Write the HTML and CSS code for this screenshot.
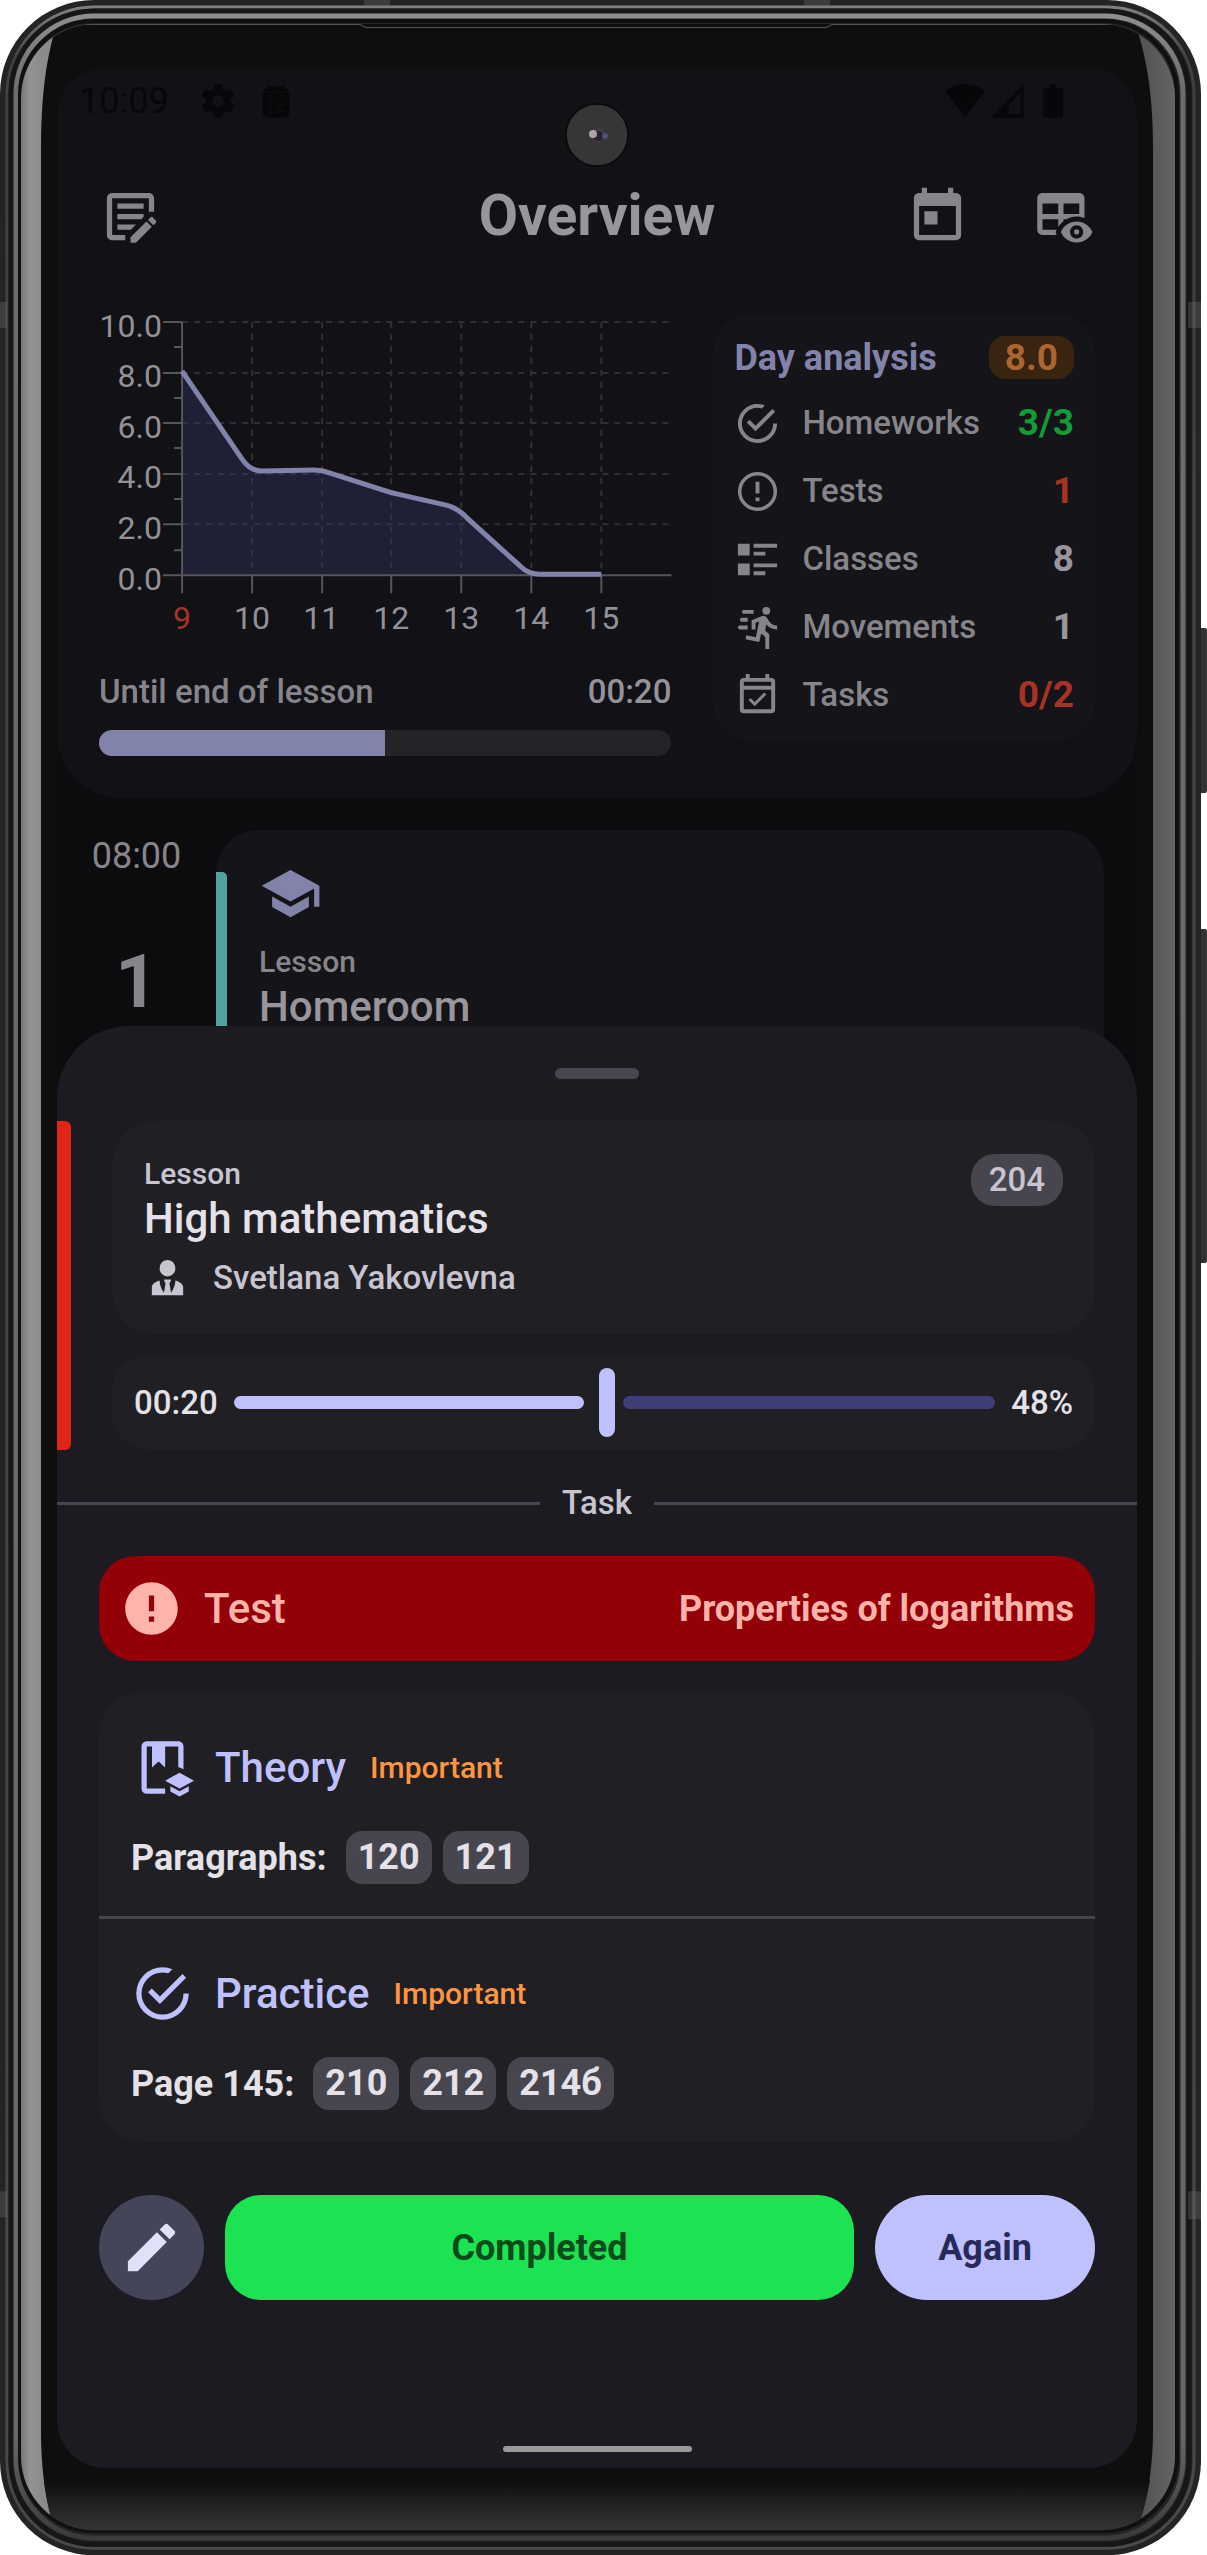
FILE: index.html
```html
<!DOCTYPE html>
<html lang="en">
<head>
<meta charset="utf-8">
<meta name="viewport" content="width=device-width, initial-scale=1">
<title>Overview</title>
<link rel="stylesheet" href="styles.css">
</head>
<body>
<div class="device">
  <svg class="device-frame" viewBox="0 0 1207 2555" preserveAspectRatio="none" aria-hidden="true">
    <defs>
      <linearGradient id="ring" x1="0" y1="0" x2="0" y2="1">
        <stop offset="0" stop-color="#8e8e8e"/><stop offset=".03" stop-color="#6c6c6c"/><stop offset=".96" stop-color="#666"/><stop offset="1" stop-color="#3a3a3a"/>
      </linearGradient>
      <linearGradient id="edge" x1="0" y1="0" x2="0" y2="1">
        <stop offset="0" stop-color="#808080"/><stop offset=".02" stop-color="#404040"/><stop offset=".97" stop-color="#484848"/><stop offset="1" stop-color="#4a4a4a"/>
      </linearGradient>
      <linearGradient id="glass" x1="0" y1="0" x2="1" y2="0">
        <stop offset="0" stop-color="#777"/><stop offset=".008" stop-color="#939393"/><stop offset=".018" stop-color="#8b8b8b"/><stop offset=".5" stop-color="#222"/><stop offset=".975" stop-color="#555"/><stop offset="1" stop-color="#646464"/>
      </linearGradient>
      <linearGradient id="chin" x1="0" y1="0" x2="0" y2="1">
        <stop offset="0" stop-color="#0e0e0e"/><stop offset="1" stop-color="#383838"/>
      </linearGradient>
      <radialGradient id="lens"><stop offset="0" stop-color="#55506a"/><stop offset=".6" stop-color="#3a3338"/><stop offset="1" stop-color="#353535"/></radialGradient>
      <clipPath id="glass-clip"><rect x="21" y="24" width="1154" height="2506" rx="74"/></clipPath>
    </defs>
    <path fill="#333" d="M1196 628h9q2 0 2 3v159q0 3-2 3h-9zM1196 929h9q2 0 2 3v328q0 3-2 3h-9z"/>
    <rect width="1201" height="2555" rx="94" fill="#242424"/>
    <rect x="7" y="7" width="1187" height="2541" rx="87" fill="none" stroke="url(#edge)" stroke-width="3"/>
    <rect x="11" y="11" width="1178" height="2533" rx="83" fill="none" stroke="#161616" stroke-width="5"/>
    <rect x="16" y="16" width="1167" height="2522" rx="78" fill="none" stroke="url(#ring)" stroke-width="5"/>
    <rect x="20" y="21" width="1157" height="2510" rx="74" fill="none" stroke="#101010" stroke-width="4"/>
    <g clip-path="url(#glass-clip)">
      <rect x="21" y="24" width="1154" height="2506" fill="url(#glass)"/>
      <path fill="#0e0e0e" d="M41 150C41 100 45 60 58 20H1134C1148 60 1153 100 1153 150V2430C1153 2470 1146 2510 1134 2535H58C46 2510 41 2470 41 2430Z"/>
      <path fill="url(#chin)" d="M44 2480H1150Q1144 2515 1134 2535H58Q48 2515 44 2480Z"/>
      <path fill="none" stroke="#555" d="M60 24.500H360L366 27.500H826L832 24.500H1134"/>
    </g>
    <g fill="#777" fill-opacity=".3"><path d="M364 0h26v8h-26zM804 0h26v8h-26zM0 302h7v26H0zM1188 302h13v26h-13zM0 2191h7v26H0zM1188 2191h13v28h-13z"/></g>
  </svg>

  <main class="screen">
    <section class="overview">
      <div class="status-bar">
        <span class="clock">10:09</span>
        <svg class="icon-s" viewBox="0 0 24 24"><path d="M12 15.500A3.500 3.500 0 0 1 8.500 12 3.500 3.500 0 0 1 12 8.500a3.500 3.500 0 0 1 3.500 3.500 3.500 3.500 0 0 1-3.500 3.500m7.430-2.530c.04-.32.07-.64.07-.97s-.03-.66-.07-1l2.110-1.630c.19-.15.24-.42.12-.64l-2-3.460c-.12-.22-.39-.31-.61-.22l-2.490 1c-.52-.39-1.060-.73-1.690-.98l-.37-2.650A.506.506 0 0 0 14 2h-4c-.25 0-.46.18-.5.420l-.37 2.650c-.63.25-1.170.59-1.690.98l-2.490-1c-.22-.09-.49 0-.61.22l-2 3.460c-.13.22-.07.49.12.64L4.570 11c-.04.34-.07.67-.07 1s.03.65.07.97l-2.110 1.660c-.19.15-.25.42-.12.64l2 3.460c.12.22.39.3.61.22l2.490-1.010c.52.4 1.060.74 1.690.99l.37 2.650c.04.24.25.42.5.42h4c.25 0 .46-.18.5-.42l.37-2.650c.63-.26 1.170-.59 1.690-.99l2.490 1.010c.22.08.49 0 .61-.22l2-3.460c.12-.22.07-.49-.12-.64z"/></svg>
        <svg class="icon-s" viewBox="0 0 24 24"><path d="M7 2l2 1.500L11 3h2l2 .5L17 2v2q3 1 3 4v10q0 4-4 4H8q-4 0-4-4V8q0-3 3-4z"/><path d="M4 6.500h16M7 10.500l1 1 1.500-2M7 14.500l1 1 1.500-2M7 18.500l1 1 1.500-2M12 10.500h5M12 14.500h5M12 18.500h5" fill="none" stroke="#121116" stroke-opacity=".7" stroke-width=".8"/></svg>
        <span class="spacer"></span>
        <svg class="icon-s" viewBox="0 0 24 24"><path d="M12 22 0 6q5-4 12-4t12 4z"/></svg>
        <svg class="icon-s" viewBox="0 0 24 24"><path fill-rule="evenodd" d="M2 22 22 2v20zM13 20h7V7l-7 7z"/></svg>
        <svg class="icon-battery" viewBox="0 0 12 20"><path d="M4 0h4v2h2.700Q12 2 12 3.300v15.400Q12 20 10.700 20H1.300Q0 20 0 18.700V3.300Q0 2 1.300 2H4z"/></svg>
      </div>
      <svg class="camera" viewBox="0 0 64 64" aria-hidden="true"><circle cx="32" cy="32" r="31" fill="#363636" stroke="#080808" stroke-width="1.500"/><circle cx="33" cy="32" r="13" fill="url(#lens)"/><circle cx="33" cy="33" r="5" fill="#29222b"/><circle cx="28" cy="31" r="4" fill="#c9bfc6" fill-opacity=".8"/><circle cx="40" cy="33" r="3" fill="#4b5170"/></svg>

      <header class="title-row">
        <div class="title-side">
          <button class="icon-button" aria-label="Edit notes"><svg class="icon-l" viewBox="0 0 24 24"><path d="M10 21H5C3.890 21 3 20.110 3 19V5C3 3.890 3.890 3 5 3H19C20.110 3 21 3.890 21 5V10.330C20.700 10.210 20.370 10.140 20.040 10.140 19.670 10.140 19.320 10.220 19 10.370V5H5V19H10.110L10 19.110V21M7 9H17V7H7V9M7 17H12.110L14.110 15H7V17M7 13H16.120L17 12.120V11H7V13M21.700 13.580L20.420 12.300C20.210 12.090 19.860 12.090 19.650 12.300L18.650 13.300 20.700 15.350 21.700 14.350C21.910 14.140 21.910 13.790 21.700 13.580M12 22H14.060L20.110 15.930 18.060 13.880 12 19.940V22Z"/></svg></button>
        </div>
        <h1>Overview</h1>
        <div class="title-side title-side-end">
          <button class="icon-button" aria-label="Today"><svg class="icon-l" viewBox="0 0 24 24"><path d="M19 3h-1V1h-2v2H8V1H6v2H5c-1.110 0-1.990.9-1.990 2L3 19c0 1.100.89 2 2 2h14c1.100 0 2-.9 2-2V5c0-1.100-.9-2-2-2zm0 16H5V8h14v11zM7 10h5v5H7z"/></svg></button>
          <button class="icon-button" aria-label="Show timetable"><svg class="icon-l" viewBox="0 0 24 24"><path d="M17 16.880C17.560 16.880 18 17.320 18 17.880S17.560 18.880 17 18.880 16 18.430 16 17.880 16.440 16.880 17 16.880M17 13.880C19.730 13.880 22.060 15.540 23 17.880 22.060 20.220 19.730 21.880 17 21.880S11.940 20.220 11 17.880C11.940 15.540 14.270 13.880 17 13.880M17 15.380C15.620 15.380 14.500 16.500 14.500 17.880S15.620 20.380 17 20.380 19.500 19.260 19.500 17.880 18.380 15.380 17 15.380M18 3H4C2.900 3 2 3.900 2 5V17C2 18.100 2.900 19 4 19H9.420C9.260 18.680 9.120 18.340 9 18 9.120 17.660 9.260 17.320 9.420 17H4V13H10V15.970C10.550 15.110 11.230 14.370 12 13.760V13H13.150C14.310 12.360 15.620 12 17 12 18.060 12 19.070 12.210 20 12.590V5C20 3.900 19.100 3 18 3M10 11H4V7H10V11M18 11H12V7H18V11Z"/></svg></button>
        </div>
      </header>

      <div class="summary">
        <div class="load">
          <svg class="chart" viewBox="99 316 572 324" role="img" aria-label="Load by hour">
            <path class="chart-grid" d="M182 323H671M182 374H671M182 424H671M182 475H671M182 525H671M252 323V576M322 323V576M391 323V576M461 323V576M531 323V576M601 323V576"/>
            <path class="chart-area" d="M182 372 243 459Q251 472 262 472L314 471Q322 471 330 474L380 490Q391 494 402 496L446 506Q458 509 467 519L520 566Q528 575 540 575L601 575V576H182Z"/>
            <path class="chart-axis" d="M182 323V594M163 576H671M163 323H182M163 374H182M163 424H182M163 475H182M163 525H182M174 348H182M174 399H182M174 449H182M174 500H182M174 551H182M252 576V594M322 576V594M391 576V594M461 576V594M531 576V594M601 576V594"/>
            <path class="chart-line" d="M182 372 242 460Q250 472 262 472L314 471Q322 471 330 474L380 490Q391 494 402 496L446 506Q458 509 467 519L520 567Q528 575 540 575L601 575"/>
            <g class="chart-labels chart-labels-y">
              <text x="162" y="338">10.0</text><text x="162" y="388">8.0</text><text x="162" y="439">6.0</text><text x="162" y="489">4.0</text><text x="162" y="540">2.0</text><text x="162" y="591">0.0</text>
            </g>
            <g class="chart-labels chart-labels-x">
              <text class="chart-now" x="182" y="630">9</text><text x="252" y="630">10</text><text x="321" y="630">11</text><text x="391" y="630">12</text><text x="461" y="630">13</text><text x="531" y="630">14</text><text x="601" y="630">15</text>
            </g>
          </svg>
          <div class="countdown"><label for="lesson-progress">Until end of lesson</label><time>00:20</time></div>
          <progress id="lesson-progress" class="progress" max="100" value="50"></progress>
        </div>

        <section class="analysis">
          <div class="analysis-head"><h2>Day analysis</h2><span class="score">8.0</span></div>
          <ul class="stats">
            <li><svg class="icon-m" viewBox="0 0 24 24"><path d="M20 12a8 8 0 0 1-8 8 8 8 0 0 1-8-8 8 8 0 0 1 8-8c.76 0 1.500.11 2.200.31l1.570-1.570A9.822 9.822 0 0 0 12 2 10 10 0 0 0 2 12a10 10 0 0 0 10 10 10 10 0 0 0 10-10M7.910 10.080 6.500 11.500 11 16 21 6l-1.410-1.420L11 13.170z"/></svg><span>Homeworks</span><b class="good">3/3</b></li>
            <li><svg class="icon-m" viewBox="0 0 24 24"><path d="M11 15h2v2h-2zm0-8h2v6h-2zm1-5a10 10 0 1 0 0 20 10 10 0 0 0 0-20m0 18.200a8.200 8.200 0 1 1 0-16.400 8.200 8.200 0 0 1 0 16.400"/></svg><span>Tests</span><b class="bad">1</b></li>
            <li><svg class="icon-m" viewBox="0 0 24 24"><path d="M2 4h6v6H2zm8 0h12v2H10zm0 4h6v2h-6zM2 14h6v6H2zm8 0h12v2H10zm0 4h6v2h-6z"/></svg><span>Classes</span><b>8</b></li>
            <li><svg class="icon-m" viewBox="0 0 24 24"><path d="M16.500 5.500A2 2 0 0 0 18.500 3.500 2 2 0 0 0 16.500 1.500 2 2 0 0 0 14.500 3.500 2 2 0 0 0 16.500 5.500M12.900 19.400L13.900 15 16 17V23H18V15.500L15.900 13.500 16.500 10.500A7.290 7.290 0 0 0 22 13V11A4.790 4.790 0 0 1 17.800 8.600L16.800 7A2.120 2.120 0 0 0 15.100 6 2.730 2.730 0 0 0 14.300 6.100L9 8.300V13H11V9.600L12.800 8.900 11.200 17 6.300 16 5.900 18 12.900 19.400M4 9A1 1 0 0 1 3 8 1 1 0 0 1 4 7H7V9H4M5 5A1 1 0 0 1 4 4 1 1 0 0 1 5 3H10V5H5M3 13A1 1 0 0 1 2 12 1 1 0 0 1 3 11H7V13H3Z"/></svg><span>Movements</span><b>1</b></li>
            <li><svg class="icon-m" viewBox="0 0 24 24"><path d="M19 3h-1V1h-2v2H8V1H6v2H5a2 2 0 0 0-2 2v14a2 2 0 0 0 2 2h14a2 2 0 0 0 2-2V5a2 2 0 0 0-2-2m0 16H5V9h14zM5 7V5h14v2zm5.560 10.460 5.940-5.930-1.070-1.060-4.870 4.870-2.110-2.110-1.060 1.060z"/></svg><span>Tasks</span><b class="bad">0/2</b></li>
          </ul>
        </section>
      </div>
    </section>

    <section class="schedule">
      <div class="slot"><time>08:00</time><strong>1</strong></div>
      <article class="slot-card">
        <span class="slot-mark"></span>
        <div class="slot-body">
          <svg class="icon-l" viewBox="0 0 24 24"><path d="M12 3 1 9l11 6 9-4.910V17h2V9M5 13.180v4L12 21l7-3.820v-4L12 17z"/></svg>
          <span class="overline">Lesson</span>
          <h3>Homeroom</h3>
        </div>
      </article>
    </section>

    <section class="sheet">
      <span class="handle"></span>
      <div class="lesson">
        <span class="lesson-mark"></span>
        <div class="lesson-cards">
          <article class="card lesson-card">
            <div>
              <span class="overline">Lesson</span>
              <h2>High mathematics</h2>
              <p class="teacher"><svg class="icon-m" viewBox="0 0 24 24"><path d="M12 3A4 4.300 0 0 1 16 7.300 4 4 0 0 1 12 11.500 4 4 0 0 1 8 7.300 4 4.300 0 0 1 12 3M16 13.540C16 14.600 15.720 17.070 13.810 19.830L13 15l.94-1.880C13.320 13.050 12.670 13 12 13s-1.320.05-1.940.12L11 15l-.81 4.830C8.280 17.070 8 14.600 8 13.540 5.610 14.240 4 15.500 4 17v4h16v-4c0-1.500-1.600-2.760-4-3.460z"/></svg>Svetlana Yakovlevna</p>
            </div>
            <span class="room">204</span>
          </article>
          <div class="card time-card">
            <label for="elapsed">00:20</label>
            <div class="slider">
              <span class="track track-done"></span><span class="track track-left"></span>
              <input id="elapsed" type="range" min="0" max="100" step="1" value="49">
            </div>
            <output for="elapsed">48%</output>
          </div>
        </div>
      </div>

      <h3 class="divider">Task</h3>

      <div class="test-card">
        <svg class="icon-l" viewBox="0 0 24 24"><path d="M12 2C6.480 2 2 6.480 2 12s4.480 10 10 10 10-4.480 10-10S17.520 2 12 2m1 15h-2v-2h2zm0-4h-2V7h2z"/></svg>
        <span class="test-name">Test</span>
        <b>Properties of logarithms</b>
      </div>

      <div class="card homework">
        <section class="homework-part">
          <header><svg class="icon-l" viewBox="0 0 24 24"><path d="M13 20H6V4h2v8l2.500-2.250L13 12V4h5v7.800l2 .9V4c0-1.100-.9-2-2-2H6a2 2 0 0 0-2 2v16a2 2 0 0 0 2 2h7zM18.500 14 13 17l5.500 3 5.500-3zM15 19.100v2L18.500 23l3.500-1.900v-2L18.500 21z"/></svg><h4>Theory</h4><em>Important</em></header>
          <p class="items"><b>Paragraphs:</b><span class="chip">120</span><span class="chip">121</span></p>
        </section>
        <section class="homework-part">
          <header><svg class="icon-l" viewBox="0 0 24 24"><path d="M20 12a8 8 0 0 1-8 8 8 8 0 0 1-8-8 8 8 0 0 1 8-8c.76 0 1.500.11 2.200.31l1.570-1.570A9.822 9.822 0 0 0 12 2 10 10 0 0 0 2 12a10 10 0 0 0 10 10 10 10 0 0 0 10-10M7.910 10.080 6.500 11.500 11 16 21 6l-1.410-1.420L11 13.170z"/></svg><h4>Practice</h4><em>Important</em></header>
          <p class="items"><b>Page 145:</b><span class="chip">210</span><span class="chip">212</span><span class="chip">214б</span></p>
        </section>
      </div>

      <div class="actions">
        <button class="edit" aria-label="Edit"><svg class="icon-l" viewBox="0 0 24 24"><path d="M20.710 7.040c.39-.39.39-1.040 0-1.410l-2.340-2.340c-.37-.39-1.020-.39-1.410 0l-1.840 1.830 3.750 3.750M3 17.250V21h3.750L17.810 9.930l-3.750-3.750z"/></svg></button>
        <button class="complete">Completed</button>
        <button class="again">Again</button>
      </div>
      <span class="home-bar"></span>
    </section>
  </main>
</div>
</body>
</html>
```
FILE: styles.css
```css
* { box-sizing: border-box; }

body {
  margin: 0;
  background: #fff;
  font-family: Roboto, "Liberation Sans", sans-serif;
  font-size: 33px;
  line-height: 40px;
  font-weight: 500;
}

h1, h2, h3, h4, p, ul { margin: 0; padding: 0; font: inherit; }
ul { list-style: none; }
svg { display: block; fill: currentColor; }

button {
  border: 0;
  padding: 0;
  background: none;
  color: inherit;
  font: inherit;
}

.icon-s { width: 40px; height: 40px; }
.icon-m { width: 47px; height: 47px; flex: none; }
.icon-l { width: 63px; height: 63px; flex: none; }

/* Phone body */
.device { position: relative; padding: 68px 70px 87px 57px; }
.device-frame { position: absolute; inset: 0; width: 100%; height: 100%; }

.screen {
  position: relative;
  overflow: hidden;
  border-radius: 48px;
  background: #0c0c0e;
  color: #95939a;
}

/* Upper panel */
.overview {
  position: relative;
  padding: 0 42px 42px;
  border-radius: 0 0 64px 64px;
  background: #121116;
}

.status-bar {
  display: flex;
  align-items: center;
  gap: 2px;
  height: 66px;
  margin: 0 -20px;
  padding-right: 52px;
  color: #070709;
}
.clock { margin-right: 27px; font-size: 36px; font-weight: 400; }
.status-bar .icon-s + .icon-s { margin-left: 16px; }
.spacer { flex: 1; }
.status-bar .spacer ~ .icon-s + .icon-s { margin-left: 0; }
.icon-battery { width: 20px; height: 34px; margin-left: 14px; }

.camera {
  position: absolute;
  top: 35px;
  left: 50%;
  width: 64px;
  height: 64px;
  margin-left: -32px;
}

.title-row {
  display: grid;
  grid-template-columns: 1fr auto 1fr;
  align-items: center;
  height: 64px;
  margin: 50px 0 67px;
}
.title-row h1 { font-size: 57px; line-height: 64px; font-weight: 700; color: #98969c; }
.title-side { display: flex; gap: 63px; color: #86858b; }
.title-side-end { justify-content: flex-end; }

.summary {
  display: grid;
  grid-template-columns: minmax(0, 3fr) minmax(0, 2fr);
  align-items: start;
  gap: 42px;
}

.chart { width: 100%; height: auto; overflow: visible; }
.chart-grid { fill: none; stroke: #303034; stroke-width: 2; stroke-dasharray: 6 6; }
.chart-area { fill: #34376a; fill-opacity: .38; }
.chart-axis { fill: none; stroke: #56555a; stroke-width: 2; }
.chart-line { fill: none; stroke: #8283ab; stroke-width: 5; }
.chart-labels { fill: #939198; font-size: 32px; font-weight: 400; }
.chart-labels-y { text-anchor: end; }
.chart-labels-x { text-anchor: middle; }
.chart-now { fill: #a93226; }

.countdown { display: flex; justify-content: space-between; margin: 33px 0 18px; color: #86858b; }
.countdown time { color: #95939a; }

.progress {
  display: block;
  width: 100%;
  height: 26px;
  border: 0;
  border-radius: 13px;
  overflow: hidden;
  appearance: none;
  background: #242428;
}
.progress::-webkit-progress-bar { background: #242428; }
.progress::-webkit-progress-value { background: #8283ab; }

.analysis { padding: 21px 21px 11px; border-radius: 36px; background: #151418; }
.analysis-head { display: flex; justify-content: space-between; align-items: center; margin-bottom: 10px; }
.analysis h2 { font-size: 36px; font-weight: 700; color: #8283ab; }
.score {
  padding: 0 16px;
  border-radius: 16px;
  background: #392411;
  color: #ad652f;
  font-size: 37px;
  line-height: 43px;
  font-weight: 700;
}
.stats li { display: flex; align-items: center; height: 68px; color: #86858b; }
.stats span { flex: 1; margin-left: 21px; }
.stats b { font-size: 37px; font-weight: 700; color: #98969c; }
.stats .good { color: #129c38; }
.stats .bad { color: #a93226; }

/* Timetable behind the sheet */
.schedule { display: grid; grid-template-columns: 159px 1fr; padding: 32px 33px 0 0; }
.slot { display: flex; flex-direction: column; align-items: center; padding-top: 4px; color: #86858b; }
.slot time { font-size: 36px; line-height: 44px; font-weight: 400; }
.slot strong { margin-top: 62px; font-size: 74px; line-height: 84px; font-weight: 700; }
.slot-card { display: flex; border-radius: 42px 42px 0 0; background: #151418; }
.slot-mark { width: 11px; margin-top: 42px; border-radius: 0 5px 0 0; background: #53a29d; }
.slot-body { padding: 32px 32px 70px; color: #8283ab; }
.slot-body .overline { margin-top: 17px; color: #86858b; }
.slot-body h3 { font-size: 42px; line-height: 50px; color: #98969c; }
.overline { display: block; font-size: 30px; line-height: 40px; }

/* Bottom sheet */
.sheet {
  position: relative;
  margin-top: -76px;
  padding: 42px 0 16px;
  border-radius: 72px 72px 0 0;
  background: #1c1b21;
  color: #c8c5d0;
}
.handle { display: block; width: 84px; height: 11px; margin: 0 auto 42px; border-radius: 6px; background: #47464f; }
.card { border-radius: 42px; background: #201f24; }

.lesson { display: flex; gap: 41px; padding-right: 42px; }
.lesson-mark { width: 14px; border-radius: 0 6px 6px 0; background: #e12418; }
.lesson-cards { display: flex; flex: 1; flex-direction: column; gap: 21px; }
.lesson-card { display: flex; justify-content: space-between; align-items: flex-start; padding: 33px 32px; }
.lesson-card h2 { font-size: 42px; line-height: 50px; color: #e4e1e9; }
.teacher { display: flex; align-items: center; gap: 22px; margin-top: 10px; }
.room { padding: 0 18px; border-radius: 24px; background: #47464f; line-height: 52px; }

.time-card { display: flex; align-items: center; gap: 16px; padding: 13px 22px; border-radius: 36px; color: #e4e1e9; }
.slider { position: relative; display: flex; flex: 1; align-items: center; gap: 39px; height: 69px; }
.track { height: 13px; border-radius: 7px; }
.track-done { width: 46%; background: #bfc1ff; }
.track-left { flex: 1; background: #3f3f77; }
.slider input { position: absolute; inset: 0; width: 100%; height: 100%; margin: 0; appearance: none; background: none; }
.slider input::-webkit-slider-thumb { width: 16px; height: 69px; border-radius: 8px; appearance: none; background: #bfc1ff; }
.slider input::-moz-range-thumb { width: 16px; height: 69px; border: 0; border-radius: 8px; background: #bfc1ff; }

.divider { display: flex; align-items: center; gap: 22px; margin: 33px 0; }
.divider::before, .divider::after { flex: 1; height: 3px; background: #47464f; content: ""; }

.test-card {
  display: flex;
  align-items: center;
  gap: 21px;
  margin: 0 42px 32px;
  padding: 21px;
  border-radius: 36px;
  background: #930008;
  color: #ffb4ab;
}
.test-name { flex: 1; font-size: 42px; }
.test-card b { font-size: 36px; font-weight: 700; }

.homework { margin: 0 42px; }
.homework-part { padding: 43px 32px 32px; }
.homework-part + .homework-part { border-top: 3px solid #47464f; }
.homework header { display: flex; align-items: center; margin-bottom: 32px; color: #bfc1ff; }
.homework h4 { margin: 0 24px 0 21px; font-size: 42px; }
.homework em { color: #ff9540; font-size: 30px; font-style: normal; }
.items { display: flex; align-items: center; gap: 11px; color: #e4e1e9; font-size: 36px; font-weight: 700; }
.items b { margin-right: 8px; font-weight: 700; }
.chip { padding: 0 12px; border-radius: 16px; background: #47464f; line-height: 53px; }

.actions { display: flex; gap: 21px; margin: 53px 42px 146px; font-size: 36px; font-weight: 700; }
.actions button { height: 105px; }
.edit { display: grid; place-items: center; width: 105px; border-radius: 50%; background: #454559; color: #e2dff9; }
.complete { flex: 1; border-radius: 36px; background: #1ce352; color: #0b4a1b; }
.again { width: 220px; border-radius: 53px; background: #bfc1ff; color: #27295b; }
.home-bar { display: block; width: 189px; height: 6px; margin: 0 auto; border-radius: 3px; background: #999; }
```
